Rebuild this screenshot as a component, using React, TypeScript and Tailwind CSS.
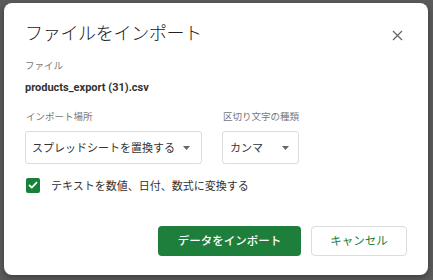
import React from "react";

const jp = { fontFamily: '"Noto Sans CJK JP", "Noto Sans", sans-serif' };

function Caret() {
  return (
    <svg width="7" height="4" viewBox="0 0 7 4" className="shrink-0">
      <path d="M0 0 L7 0 L3.5 4 Z" fill="#666" />
    </svg>
  );
}

export default function App() {
  return (
    <div className="w-[433px] h-[280px] bg-[#5b5b5b] pt-[3px] pl-[4px] overflow-hidden" style={jp}>
      <div className="relative w-[424px] h-[272px] bg-white rounded-[8px] shadow-[0_2px_6px_rgba(0,0,0,0.35)] pl-[21px] pt-[17px] flex flex-col">
        <div className="text-[18px] leading-[24px] text-[#202124] font-light tracking-[-0.3px]">ファイルをインポート</div>
        <button className="absolute right-[25px] top-[26px] w-[12px] h-[12px] flex items-center justify-center">
          <svg width="11" height="11" viewBox="0 0 11 11">
            <path d="M1 1 L10 10 M10 1 L1 10" stroke="#666" strokeWidth="1.3" />
          </svg>
        </button>
        <div className="mt-[14px] text-[9.5px] leading-[14px] text-[#777]">ファイル</div>
        <div
          className="mt-[8px] text-[11px] leading-[16px] font-bold text-[#333]"
          style={{ fontFamily: 'Roboto, "Noto Sans", sans-serif' }}
        >
          products_export (31).csv
        </div>
        <div className="mt-[13px] flex gap-[20px]">
          <div className="flex flex-col w-[177px]">
            <div className="text-[9.5px] leading-[14px] text-[#777] ml-[1px]">インポート場所</div>
            <div className="mt-[8px] h-[33px] w-[177px] border border-[#dadce0] rounded-[3px] flex items-center pl-[6px] pr-[11px] justify-between">
              <span className="text-[11px] text-[#333] whitespace-nowrap">スプレッドシートを置換する</span>
              <Caret />
            </div>
          </div>
          <div className="flex flex-col w-[77px]">
            <div className="text-[9.5px] leading-[14px] text-[#777] ml-[1px] whitespace-nowrap">区切り文字の種類</div>
            <div className="mt-[8px] h-[33px] w-[77px] border border-[#dadce0] rounded-[3px] flex items-center pl-[7px] pr-[9px] justify-between">
              <span className="text-[11px] text-[#333]">カンマ</span>
              <Caret />
            </div>
          </div>
        </div>
        <div className="mt-[13px] flex items-center gap-[11px] ml-[1px]">
          <div className="w-[14px] h-[15px] rounded-[2px] bg-[#188038] flex items-center justify-center">
            <svg width="10" height="8" viewBox="0 0 10 8">
              <path d="M1 4 L3.8 6.6 L9 1.2" stroke="white" strokeWidth="1.8" fill="none" />
            </svg>
          </div>
          <span className="text-[11px] leading-[16px] text-[#333]">テキストを数値、日付、数式に変換する</span>
        </div>
        <div className="mt-auto mb-[19px] flex justify-end gap-[10px] pr-[21px]">
          <button className="h-[30px] w-[143px] rounded-[4px] bg-[#1e7e3c] text-white text-[11.5px] font-medium">
            データをインポート
          </button>
          <button className="h-[30px] w-[96px] rounded-[4px] border border-[#dadce0] bg-white text-[#188038] text-[11.5px]">
            キャンセル
          </button>
        </div>
      </div>
    </div>
  );
}
